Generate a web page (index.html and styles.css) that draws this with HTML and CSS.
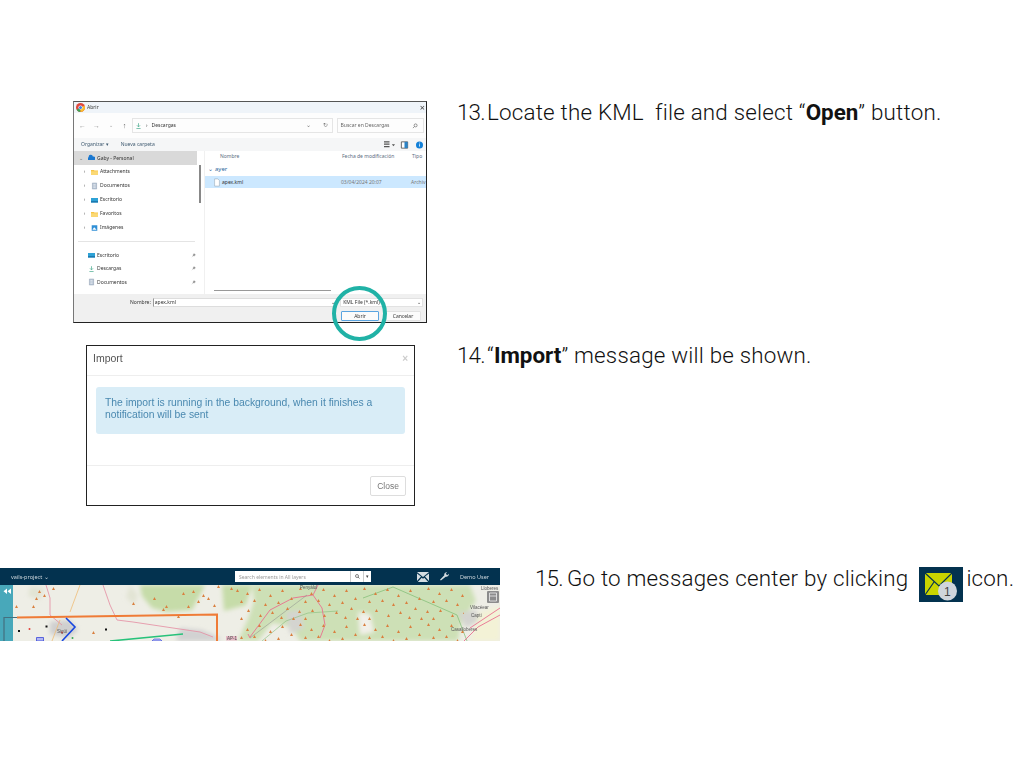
FILE: index.html
```html
<!DOCTYPE html>
<html lang="en">
<head>
  <meta charset="UTF-8">
  <meta name="viewport" content="width=device-width, initial-scale=1.0">
  <title>Import KML steps</title>
  <link rel="stylesheet" href="styles.css">
</head>
<body>
  <svg class="defs" width="0" height="0">
    <symbol id="folder" viewBox="0 0 10 10"><path d="M0 2h4l1 1h5v6H0z" fill="#f6c445"/><path d="M0 4h10v5H0z" fill="#fbd975"/></symbol>
    <symbol id="doc" viewBox="0 0 10 10"><path d="M2 .5h6v9H2z" fill="#b9c6d6" stroke="#7c8ea3" stroke-width=".6"/><path d="M3.5 3h3M3.5 5h3M3.5 7h3" stroke="#fff" stroke-width=".7"/></symbol>
    <symbol id="desk" viewBox="0 0 10 10"><path d="M0 2h10v6.500H0z" fill="#2ea2d6"/><path d="M0 6.500h10v2H0z" fill="#1b79b0"/></symbol>
    <symbol id="down" viewBox="0 0 10 10"><path d="M5 1v5M2.800 4 5 6.300 7.200 4M2 8.600h6" fill="none" stroke="#45a98d" stroke-width="1"/></symbol>
    <symbol id="pics" viewBox="0 0 10 10"><path d="M1 1h8v8H1z" fill="#2f8fd6"/><path d="M2 7.500 4.500 4 8 7.500z" fill="#fff"/></symbol>
    <symbol id="pin" viewBox="0 0 10 10"><path d="M6 1 9 4 7.500 4.500 6 6.500 3.500 4 5.500 2.500zM4.500 5.500 1.500 8.500" fill="#888" stroke="#888" stroke-width=".6"/></symbol>
    <symbol id="tri" viewBox="0 0 3 3"><path d="M1.500 0 3 3H0z" fill="#d9803f"/></symbol>
  </svg>

  <main class="slide">

    <!-- Step 13 -->
    <section class="step step-open">
      <div class="shot-col">
        <div class="win">
          <div class="win-title">
            <svg class="chrome" viewBox="0 0 10 10"><circle cx="5" cy="5" r="5" fill="#e0483c"/><path d="M5 5 .7 7.500A5 5 0 0 0 5 10z" fill="#3aa757"/><path d="M5 5v5A5 5 0 0 0 9.500 3z" fill="#fbc02d"/><circle cx="5" cy="5" r="2.300" fill="#fff"/><circle cx="5" cy="5" r="1.700" fill="#3f7ee8"/></svg>
            <span>Abrir</span>
            <span class="win-close">×</span>
          </div>
          <div class="win-nav">
            <span class="nav-arrows">
              <i>←</i><i>→</i><i class="mini">⌄</i><i class="dark">↑</i>
            </span>
            <div class="addr">
              <svg class="ico" viewBox="0 0 10 10"><use href="#down"/></svg>
              <span class="crumb">›</span>
              <span>Descargas</span>
              <span class="addr-tools"><i>⌄</i><i>↻</i></span>
            </div>
            <div class="search-box"><span>Buscar en Descargas</span><svg class="ico-s" viewBox="0 0 10 10"><circle cx="6" cy="4" r="2.500" fill="none" stroke="#555"/><path d="M4 6 1.500 8.500" stroke="#555"/></svg></div>
          </div>
          <div class="win-tools">
            <span>Organizar ▾</span>
            <span class="new-folder">Nueva carpeta</span>
            <span class="tool-icons">
              <svg class="tool" viewBox="0 0 14 10"><path d="M0 1h7M0 4h7M0 7h7" stroke="#555" stroke-width="1.500"/><path d="M10 4h4l-2 2.500z" fill="#555"/></svg>
              <svg class="tool" viewBox="0 0 14 10"><path d="M3 1h8v8H3z" fill="#fff" stroke="#444"/><path d="M7 1h4v8H7z" fill="#2b83c6"/></svg>
              <svg class="tool" viewBox="0 0 14 10"><circle cx="7" cy="5" r="4.500" fill="#1380d8"/><path d="M7 4v3M7 2v1" stroke="#fff"/></svg>
            </span>
          </div>
          <div class="win-main">
            <nav class="tree">
              <div class="tree-top"><i>⌄</i><svg class="ico" viewBox="0 0 10 10"><path d="M1 8a2 2 0 0 1 0-4 3 3 0 0 1 6-1 2.500 2.500 0 0 1 2 5z" fill="#1b78d0"/></svg><span>Gaby - Personal</span></div>
              <div class="tree-item"><i>›</i><svg class="ico" viewBox="0 0 10 10"><use href="#folder"/></svg><span>Attachments</span></div>
              <div class="tree-item"><i>›</i><svg class="ico" viewBox="0 0 10 10"><use href="#doc"/></svg><span>Documentos</span></div>
              <div class="tree-item"><i>›</i><svg class="ico" viewBox="0 0 10 10"><use href="#desk"/></svg><span>Escritorio</span></div>
              <div class="tree-item"><i>›</i><svg class="ico" viewBox="0 0 10 10"><use href="#folder"/></svg><span>Favoritos</span></div>
              <div class="tree-item"><i>›</i><svg class="ico" viewBox="0 0 10 10"><use href="#pics"/></svg><span>Imágenes</span></div>
              <hr class="tree-sep">
              <div class="tree-item quick"><svg class="ico" viewBox="0 0 10 10"><use href="#desk"/></svg><span>Escritorio</span><svg class="pin" viewBox="0 0 10 10"><use href="#pin"/></svg></div>
              <div class="tree-item quick"><svg class="ico" viewBox="0 0 10 10"><use href="#down"/></svg><span>Descargas</span><svg class="pin" viewBox="0 0 10 10"><use href="#pin"/></svg></div>
              <div class="tree-item quick"><svg class="ico" viewBox="0 0 10 10"><use href="#doc"/></svg><span>Documentos</span><svg class="pin" viewBox="0 0 10 10"><use href="#pin"/></svg></div>
            </nav>
            <div class="tree-scroll"><div class="tree-thumb"></div></div>
            <div class="files">
              <div class="file-head"><span class="col-name">Nombre</span><span class="col-date">Fecha de modificación</span><span class="col-type">Tipo</span></div>
              <div class="file-group"><i>⌄</i> ayer</div>
              <div class="file-row"><svg class="file-ico" viewBox="0 0 10 10"><path d="M2 .5h4l2 2v7H2z" fill="#fff" stroke="#8a9aa8" stroke-width=".6"/></svg><span class="col-name-r">apex.kml</span><span class="col-date">03/04/2024 20:07</span><span class="col-type">Archiv</span></div>
              <div class="h-scroll"></div>
            </div>
          </div>
          <div class="win-foot">
            <div class="foot-row">
              <label class="foot-label">Nombre:</label>
              <div class="name-input"><span>apex.kml</span><i>⌄</i></div>
              <div class="type-select"><span>KML File (*.kml)</span><i>⌄</i></div>
            </div>
            <div class="foot-row foot-btns">
              <button class="win-btn win-btn-main">Abrir</button>
              <button class="win-btn">Cancelar</button>
            </div>
          </div>
          <div class="ring"></div>
        </div>
      </div>
      <p class="caption"><span class="num">13.</span><span>Locate the KML&nbsp; file and select “<b>Open</b>” button.</span></p>
    </section>

    <!-- Step 14 -->
    <section class="step step-import">
      <div class="shot-col">
        <div class="modal">
          <div class="modal-head"><span>Import</span><span class="modal-x">×</span></div>
          <div class="modal-body">
            <div class="alert">The import is running in the background, when it finishes a notification will be sent</div>
          </div>
          <div class="modal-foot"><button class="close-btn">Close</button></div>
        </div>
      </div>
      <p class="caption"><span class="num">14.</span><span>“<b>Import</b>” message will be shown.</span></p>
    </section>

    <!-- Step 15 -->
    <section class="step step-messages">
      <div class="shot-col wide">
        <div class="app">
          <header class="app-bar">
            <span class="app-name">vails-project <i>⌄</i></span>
            <div class="app-search">
              <span class="app-search-text">Search elements in All layers</span>
              <span class="app-search-btn"><svg class="app-glass" viewBox="0 0 10 10"><circle cx="4" cy="4" r="3" fill="none" stroke="#444" stroke-width="1.300"/><path d="M6.200 6.200 9 9" stroke="#444" stroke-width="1.500"/></svg></span>
              <span class="app-search-drop">▾</span>
            </div>
            <svg class="app-mail" viewBox="0 0 12 10"><path d="M0 0h12L6 5z" fill="#d5dde2"/><path d="M0 1.500V9l4-4.500zM12 1.500V9L8 4.500zM.8 10l3.900-4.300L6 6.800l1.300-1.100L11.200 10z" fill="#d5dde2"/></svg>
            <svg class="app-wrench" viewBox="0 0 10 10"><path d="M1 9.500 0 8.500 4.800 3.700A2.800 2.800 0 0 1 8 .2L6.300 1.900l1.800 1.800L9.800 2A2.800 2.800 0 0 1 6.300 5.200z" fill="#d5dde2"/></svg>
            <span class="app-user">Demo User</span>
          </header>
          <div class="map">
            <svg class="map-svg" viewBox="0 585 500 56">
              <defs>
                <filter id="soft" x="-10%" y="-10%" width="120%" height="120%"><feGaussianBlur stdDeviation="2"/></filter>
                <pattern id="peaks" x="232" y="585" width="64" height="36" patternUnits="userSpaceOnUse">
                  <use href="#tri" x="3" y="2" width="3" height="3"/><use href="#tri" x="14" y="7" width="3" height="3"/>
                  <use href="#tri" x="26" y="3" width="3" height="3"/><use href="#tri" x="37" y="9" width="3" height="3"/>
                  <use href="#tri" x="49" y="4" width="3" height="3"/><use href="#tri" x="58" y="12" width="3" height="3"/>
                  <use href="#tri" x="8" y="15" width="3" height="3"/><use href="#tri" x="21" y="14" width="3" height="3"/>
                  <use href="#tri" x="32" y="18" width="3" height="3"/><use href="#tri" x="45" y="16" width="3" height="3"/>
                  <use href="#tri" x="54" y="22" width="3" height="3"/><use href="#tri" x="2" y="25" width="3" height="3"/>
                  <use href="#tri" x="15" y="24" width="3" height="3"/><use href="#tri" x="27" y="29" width="3" height="3"/>
                  <use href="#tri" x="39" y="26" width="3" height="3"/><use href="#tri" x="48" y="31" width="3" height="3"/>
                  <use href="#tri" x="8" y="32" width="3" height="3"/><use href="#tri" x="60" y="32" width="3" height="3"/>
                </pattern>
              </defs>
              <rect x="0" y="585" width="500" height="56" fill="#eeeee6"/>
              <g filter="url(#soft)">
                <path d="M140 585h65l-5 10 -8 15 -25 2 -15-4 -10-12z" fill="#c6dca9"/>
                <path d="M222 585h30l-6 20 -22 6z" fill="#c6dca9"/>
                <path d="M252 585h218l6 16 -14 18 -4 22H300l-8-14 -20-4 -14 18h-20l10-22 6-18z" fill="#cde0b6"/>
                <path d="M50 622l20-2 8 10 -10 8 -18-4z" fill="#cfcfcf"/>
                <path d="M180 628l22 2 18 8v3h-44z" fill="#d2d2d2"/>
                <path d="M130 585l8 10 -4 10 -8-8zM30 586l14 2 -4 12 -12-4z" fill="#e2e4d4"/>
                <path d="M286 612l14-2 4 18 -14 6z" fill="#d4d4d0"/>
                <path d="M358 612l12 2 4 18 -14 3z" fill="#f2f0ea"/>
                <path d="M458 613l18-3 4 10 -14 8z" fill="#d4d4d0"/>
                <path d="M480 612l20-6v35h-30z" fill="#f3f2d6"/>
              </g>
              <path d="M363 598l30-11 64 28 10 26" fill="none" stroke="#7dbb73" stroke-width=".7"/>
              <path d="M262 641l24-20 22-8 30-2" fill="none" stroke="#86bd7c" stroke-width=".6"/>
              <path d="M80 585 70 612M60 620l-8 21" fill="none" stroke="#efbd77" stroke-width=".8"/>
              <path d="M46 585l4 13v17l12 10M103 585l7 20 7 15 16 2 40 6 27 4 13 5" fill="none" stroke="#e58ba1" stroke-width=".8"/>
              <path d="M250 638l-2-4M250 637l20-27 23-12 20-3 5-10M313 595l9 13 3 17 -5 13" fill="none" stroke="#e9708e" stroke-width=".9"/>
              <path d="M250 638l57-43" fill="none" stroke="#8a8a8a" stroke-width=".5"/>
              <path d="M470 628l30-20M464 641l14-14 22-12" fill="none" stroke="#e9708e" stroke-width=".9"/>
              <path d="M38 593h3l-1.500-3zM43 597h3l-1.500-3zM35 600h3l-1.500-3zM52 590h3l-1.500-3zM15 608h3l-1.500-3zM32 608h3l-1.500-3zM92 634h3l-1.500-3zM132 605h3l-1.500-3zM153 600h3l-1.500-3zM165 608h3l-1.500-3zM162 611h3l-1.500-3zM182 595h3l-1.500-3zM192 593h3l-1.500-3zM202 597h3l-1.500-3zM197 603h3l-1.500-3zM187 608h3l-1.500-3zM213 607h3l-1.500-3zM217 588h3l-1.500-3zM230 590h3l-1.500-3zM236 592h3l-1.500-3zM177 618h3l-1.500-3zM207 600h3l-1.500-3z" fill="#d9803f"/>
              <rect x="240" y="585" width="224" height="56" fill="url(#peaks)"/>
              <path d="M17 617.500 217 614.500V641" fill="none" stroke="#ef7b36" stroke-width="2"/>
              <path d="M66 618l9 9 -13 14" fill="none" stroke="#1746e0" stroke-width="1.600"/>
              <path d="M110 641l73-7" fill="none" stroke="#27c27a" stroke-width="1.600"/>
              <path d="M36.500 637.500h7V641h-7z" fill="#b2b8f2" stroke="#3a48d8" stroke-width=".8"/>
              <path d="M152 641l2-2h6l2 2z" fill="#b2b8f2" stroke="#3a48d8" stroke-width=".6"/>
              <path d="M18 630h2v2h-2zM45.500 625.500h2v2h-2zM105 628.500h2v2h-2z" fill="#111"/>
              <circle cx="29.500" cy="629" r="1" fill="#e2403a"/><circle cx="62" cy="632.500" r="1" fill="#e2403a"/><circle cx="72.500" cy="638" r="1" fill="#3aa757"/>
              <rect x="226" y="636" width="11" height="4.500" fill="#e6b9c5"/>
              <rect x="0" y="585" width="13" height="56" fill="#35a0b5" opacity=".9"/>
              <path d="M4 641V617.500H17" fill="none" stroke="#44707f" stroke-width="1.200"/>
              <path d="M7 588.500l-3.500 2.800 3.500 2.800zM11 588.500l-3.500 2.800 3.500 2.800z" fill="#fff"/>
              <rect x="487" y="591" width="12" height="12" rx="1" fill="#8c8c8c"/>
              <path d="M489.500 593h7v8h-7zM489.500 596h7" fill="none" stroke="#eee" stroke-width=".8"/>
              <text x="300" y="589" class="map-label">Penyàlol</text>
              <text x="57" y="633" class="map-label">Sigüí</text>
              <text x="227" y="639.500" class="map-label">AP-1</text>
              <text x="481" y="590" class="map-label">Lloberes</text>
              <text x="470" y="609" class="map-label">Vilacéear</text>
              <text x="471" y="617" class="map-label">Captí</text>
              <text x="451" y="631" class="map-label">Casalloberes</text>
            </svg>
          </div>
        </div>
      </div>
      <p class="caption"><span class="num">15.</span><span>Go to messages center by clicking</span>
        <svg class="msg-icon" viewBox="0 0 44 35">
          <rect width="44" height="35" fill="#03324f"/>
          <path d="M6 6h27v22H6z" fill="#c9d400"/>
          <path d="M6 6 20 19 33 6M6 28l9-13" fill="none" stroke="#03324f" stroke-width="1.200"/>
          <path d="M24 22 33 28" fill="none" stroke="#03324f" stroke-width="1"/>
          <circle cx="28.500" cy="24" r="9.500" fill="#cfd5db"/>
          <text x="28.500" y="28.500" class="msg-count">1</text>
        </svg>
        <span>icon.</span>
      </p>
    </section>

  </main>
</body>
</html>
```

FILE: styles.css
```css
* { margin: 0; padding: 0; box-sizing: border-box; }
html, body { background: white; }
body { font-family: "Noto Sans", Arial, sans-serif; }
i { font-style: normal; }
.defs { display: block; height: 0; }

.slide { width: 1024px; height: 768px; padding-top: 101px; overflow: hidden; }

.step { display: flex; align-items: flex-start; }
.step-open { height: 244px; }
.step-import { height: 223px; }
.shot-col { width: 457px; flex: none; }
.shot-col.wide { width: 535px; }

.caption {
  display: flex; align-items: flex-start;
  font-family: "Roboto", Arial, sans-serif;
  font-size: 22.400px;
  font-weight: 300;
  letter-spacing: .2px;
  line-height: 24px;
  color: #111;
  white-space: pre-wrap;
}
.caption b { font-weight: 700; color: #111; letter-spacing: 0; }
.num { margin-right: 4px; letter-spacing: -.8px; width: 26px; flex: none; }
.step-open .caption { margin-top: -1px; }
.step-import .caption { margin-top: -2px; }
.step-messages .caption { margin-top: -2px; }
.step-messages .num { width: 28px; margin-right: 4px; }
.msg-icon { width: 44px; height: 35px; margin: 1px 3px 0 11px; flex: none; }
.msg-count { font-family: "Liberation Sans", Arial, sans-serif; font-size: 12px; fill: #444; text-anchor: middle; }

/* file dialog */
.win {
  position: relative;
  width: 354px; height: 222px;
  margin-left: 73px;
  border: 1px solid #222;
  border-top-color: #555;
  border-left-color: #777;
  background: white;
  font-size: 5px;
  line-height: 7px;
  color: #333;
  display: flex; flex-direction: column;
}
.win-title, .win-nav, .win-tools, .win-main, .win-foot { filter: blur(.3px); }
.win-title { height: 11px; flex: none; background: #eff4f9; display: flex; align-items: center; padding-left: 1px; gap: 2px; }
.chrome { width: 9px; height: 9px; margin-left: 1px; }
.win-close { margin-left: auto; margin-right: 1px; font-size: 9px; color: #444; }
.win-nav { height: 25px; flex: none; display: flex; align-items: center; padding: 0 2px 0 3px; background: #fdfdfd; }
.nav-arrows { width: 55px; flex: none; display: flex; gap: 7px; padding-left: 2px; font-size: 7px; color: #999; }
.nav-arrows i { width: 7px; text-align: center; }
.nav-arrows .mini { font-size: 5px; }
.nav-arrows .dark { color: #555; }
.addr { width: 202px; height: 15px; border: 1px solid #e5e5e5; display: flex; align-items: center; gap: 3px; padding-left: 2px; }
.crumb { margin: 0 1px; }
.addr-tools { margin-left: auto; display: flex; gap: 12px; padding-right: 4px; color: #777; font-size: 6px; }
.search-box { width: 88px; height: 15px; margin-left: 4px; border: 1px solid #e5e5e5; display: flex; align-items: center; justify-content: space-between; padding: 0 5px 0 3px; color: #666; }
.ico { width: 7px; height: 8px; flex: none; }
.ico-s { width: 6px; height: 6px; }
.win-tools { height: 13px; flex: none; background: #f5f6f7; display: flex; align-items: center; padding-left: 7px; color: #3f5a70; }
.new-folder { margin-left: 12px; }
.tool-icons { margin-left: auto; display: flex; gap: 3px; padding-right: 1px; }
.tool { width: 11px; height: 8px; margin-left: 1px; }
.win-main { height: 143px; flex: none; display: flex; overflow: hidden; }
.tree { width: 123px; flex: none; }
.tree-top { height: 14px; background: #d9d9d9; display: flex; align-items: center; padding-left: 4px; }
.tree-top i { width: 5px; margin-right: 5px; text-align: center; color: #666; }
.tree-top .ico { margin-right: 2px; }
.tree-item { height: 13.900px; display: flex; align-items: center; padding-left: 8px; }
.tree-item i { width: 5px; margin-right: 4px; text-align: center; color: #666; }
.tree-item .ico { margin-right: 2px; }
.tree-sep { border: 0; border-top: 1px solid #e4e4e4; margin: 7px 2px 6px 4px; }
.quick { height: 13.500px; padding-left: 14px; }
.pin { width: 5px; height: 5px; margin-left: auto; margin-right: 1px; }
.tree-scroll { width: 7px; flex: none; padding: 14px 2px 0 2px; }
.tree-thumb { width: 2px; height: 38px; background: #888; }
.files { flex: 1; position: relative; background: white; border-left: 1px solid #f0f0f0; }
.file-head { height: 11px; display: flex; align-items: center; color: #5b6d80; }
.col-name { margin-left: 15px; width: 122px; }
.col-date { width: 70px; flex: none; }
.col-type { flex: none; }
.file-group { height: 14px; padding-left: 3px; display: flex; align-items: center; gap: 2px; color: #2c6a9c; font-size: 6px; }
.file-row { height: 12px; background: #cce8ff; display: flex; align-items: center; padding-left: 8px; }
.file-ico { width: 8px; height: 9px; margin-right: 1px; flex: none; }
.col-name-r { width: 119px; }
.file-row .col-date, .file-row .col-type { color: #777; }
.h-scroll { position: absolute; left: 9px; bottom: 3px; width: 117px; height: 1px; background: #999; }
.win-foot { flex: 1; background: #f0f0f0; padding: 4px 3px 0 0; }
.foot-row { display: flex; align-items: center; }
.foot-label { width: 77px; text-align: right; margin-right: 2px; }
.name-input { width: 185px; height: 9px; background: white; border: 1px solid #ddd; border-left-color: #999; display: flex; align-items: center; justify-content: space-between; padding: 0 1px 0 1px; }
.type-select { width: 83px; height: 9px; margin-left: 3px; background: white; border: 1px solid #e2e2e2; display: flex; align-items: center; justify-content: space-between; padding: 0 1px 0 2px; }
.foot-btns { justify-content: flex-end; margin-top: 4px; padding-right: 2px; gap: 6px; }
.win-btn { width: 36px; height: 10px; font: inherit; line-height: 8px; background: #fbfbfb; border: 1px solid #e2e2e2; border-radius: 1px; color: #333; }
.win-btn-main { width: 38px; border-color: #5aa4e0; }
.ring {
  position: absolute;
  left: 258px; top: 184px;
  width: 55px; height: 55px;
  border: 4px solid #20b2a6;
  border-radius: 50%;
}

/* import modal */
.modal {
  width: 329px; height: 161px;
  margin-left: 86px;
  border: 1px solid #222;
  background: white;
  font-family: "Liberation Sans", Arial, sans-serif;
  display: flex; flex-direction: column;
}
.modal-head, .modal-body, .modal-foot { filter: blur(.25px); }
.modal-head { height: 30px; flex: none; border-bottom: 1px solid #eee; display: flex; align-items: center; justify-content: space-between; padding: 0 6px 5px 6px; font-size: 10.500px; color: #555; }
.modal-x { font-size: 10px; font-weight: 700; color: #ccc; }
.modal-body { flex: 1; padding: 11px 9px 0 9px; }
.alert { height: 47px; background: #d9edf7; border-radius: 3px; padding: 10px 9px; font-size: 10.350px; line-height: 11.500px; color: #4a89b0; }
.modal-foot { height: 40px; flex: none; border-top: 1px solid #eee; display: flex; align-items: flex-start; justify-content: flex-end; padding: 10px 8px 0 0; }
.close-btn { width: 36px; height: 20px; font: inherit; font-size: 8.500px; background: white; color: #777; border: 1px solid #ddd; border-radius: 2px; }

/* app screenshot */
.app { width: 500px; height: 73px; overflow: hidden; filter: blur(.35px); }
.app-bar { height: 17px; background: #03324f; display: flex; align-items: center; font-size: 5.500px; color: #cfd8de; padding-left: 11px; }
.app-name { width: 224px; flex: none; }
.app-search { width: 136px; height: 11px; background: white; display: flex; align-items: center; color: #999; font-size: 5px; }
.app-search-text { width: 115px; padding-left: 4px; }
.app-search-btn { width: 13px; height: 11px; border-left: 1px solid #ccc; display: flex; align-items: center; justify-content: center; }
.app-glass { width: 5px; height: 5px; }
.app-search-drop { flex: 1; height: 11px; border-left: 1px solid #ccc; text-align: center; color: #444; line-height: 11px; }
.app-mail { width: 12px; height: 10px; margin-left: 46px; flex: none; }
.app-wrench { width: 9px; height: 9px; margin-left: 11px; flex: none; }
.app-user { margin-left: 11px; }
.map { height: 56px; }
.map-svg { display: block; width: 500px; height: 56px; }
.map-label { font-family: "Liberation Sans", Arial, sans-serif; font-size: 4.500px; fill: #555; }
```
